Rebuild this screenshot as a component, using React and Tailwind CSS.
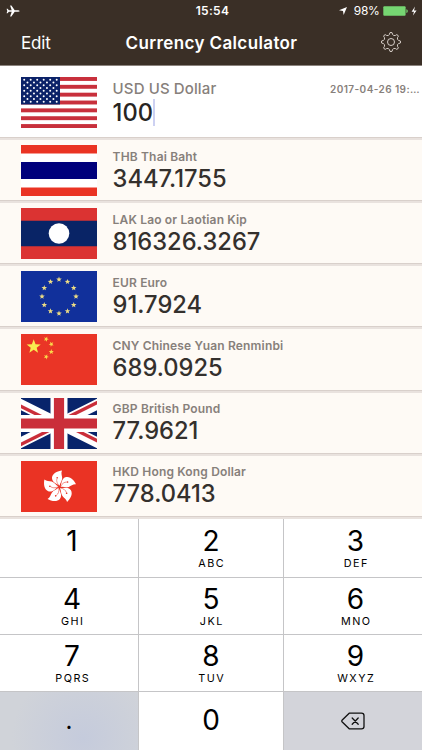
import { Fragment } from "react";

const starPoints = (cx, cy, r, turn = 0) =>
    Array.from({ length: 10 }, (_, i) => {
        const radius = i % 2 ? r * 0.42 : r;
        const a = ((i * 36 - 90 + turn) * Math.PI) / 180;
        return `${(cx + radius * Math.cos(a)).toFixed(2)},${(cy + radius * Math.sin(a)).toFixed(2)}`;
    }).join(" ");

function Flag({ children }) {
    return (
        <svg viewBox="0 0 76 51" preserveAspectRatio="none" className="h-[51px] w-[76px] shrink-0">
            {children}
        </svg>
    );
}

function UsFlag() {
    return (
        <Flag>
            <rect width="76" height="51" fill="#fff" />
            {[0, 2, 4, 6, 8, 10, 12].map((i) => (
                <rect key={i} y={(i * 51) / 13} width="76" height={51 / 13} fill="#c8303c" />
            ))}
            <rect width="39" height={(51 * 7) / 13} fill="#0b2268" />
            {Array.from({ length: 9 }, (_, row) =>
                Array.from({ length: row % 2 ? 5 : 6 }, (_, col) => (
                    <circle
                        key={`${row}-${col}`}
                        cx={3.2 + (row % 2 ? 3.25 : 0) + col * 6.5}
                        cy={2.8 + row * 2.75}
                        r="1"
                        fill="#fff"
                    />
                ))
            )}
        </Flag>
    );
}

function ThaiFlag() {
    return (
        <Flag>
            <rect width="76" height="51" fill="#ea3323" />
            <rect y="8.5" width="76" height="34" fill="#fff" />
            <rect y="17" width="76" height="17" fill="#00007b" />
        </Flag>
    );
}

function LaoFlag() {
    return (
        <Flag>
            <rect width="76" height="51" fill="#db3332" />
            <rect y="12.75" width="76" height="25.5" fill="#092466" />
            <circle cx="38" cy="25.5" r="10.3" fill="#fff" />
        </Flag>
    );
}

function EuFlag() {
    return (
        <Flag>
            <rect width="76" height="51" fill="#11309b" />
            {Array.from({ length: 12 }, (_, i) => (
                <polygon
                    key={i}
                    points={starPoints(
                        38 + 17 * Math.sin((i * Math.PI) / 6),
                        25.5 - 17 * Math.cos((i * Math.PI) / 6),
                        2.9
                    )}
                    fill="#eddc84"
                />
            ))}
        </Flag>
    );
}

function ChinaFlag() {
    return (
        <Flag>
            <rect width="76" height="51" fill="#ea3526" />
            <polygon points={starPoints(12.7, 12.7, 7.4)} fill="#f9ec4f" />
            <polygon points={starPoints(25.2, 5.1, 2.7, 23)} fill="#f9d94b" />
            <polygon points={starPoints(30.3, 10.2, 2.7, 46)} fill="#f9d94b" />
            <polygon points={starPoints(30.3, 17.8, 2.7)} fill="#f9d94b" />
            <polygon points={starPoints(25.2, 22.8, 2.7, 23)} fill="#f9d94b" />
        </Flag>
    );
}

// 2:1 flag cropped at both sides, so the saltire starts outside the box
function UkFlag() {
    return (
        <Flag>
            <rect width="76" height="51" fill="#08246b" />
            <path d="M-13 0L89 51M89 0L-13 51" stroke="#fff" strokeWidth="10.2" />
            <path
                d="M-13 0L38 25.5V29.3L-13 3.8ZM89 0L38 25.5V21.7L89 -3.8ZM89 51L38 25.5V21.7L89 47.2ZM-13 51L38 25.5V29.3L-13 54.8Z"
                fill="#ca2e3a"
            />
            <path d="M38 0V51M0 25.5H76" stroke="#fff" strokeWidth="17" />
            <path d="M38 0V51M0 25.5H76" stroke="#ca2e3a" strokeWidth="10.2" />
        </Flag>
    );
}

function HongKongFlag() {
    return (
        <Flag>
            <rect width="76" height="51" fill="#ea3324" />
            {[0, 72, 144, 216, 288].map((turn) => (
                <g key={turn} transform={`translate(38.4 26) rotate(${turn})`}>
                    <path
                        d="M0.2 -1.2C-2.5 -3 -7.8 -4.8 -7.4 -9.4C-6.9 -14 -1.5 -16.2 2.6 -16.6C1.3 -14 2.7 -11.6 2.8 -9C2.8 -6 0.6 -4 0.2 -1.2Z"
                        fill="#fff"
                    />
                    <path d="M0 -1C-2.6 -4 -3.2 -6 -2.4 -8.6" fill="none" stroke="#ea3324" strokeWidth="0.5" />
                    <circle cx="-2.2" cy="-9.3" r="0.8" fill="#ea3324" />
                </g>
            ))}
        </Flag>
    );
}

const currencies = [
    { name: "THB Thai Baht", value: "3447.1755", flag: ThaiFlag },
    { name: "LAK Lao or Laotian Kip", value: "816326.3267", flag: LaoFlag },
    { name: "EUR Euro", value: "91.7924", flag: EuFlag },
    { name: "CNY Chinese Yuan Renminbi", value: "689.0925", flag: ChinaFlag },
    { name: "GBP British Pound", value: "77.9621", flag: UkFlag },
    { name: "HKD Hong Kong Dollar", value: "778.0413", flag: HongKongFlag },
];

const keyRows = [
    { pad: "pt-1.5", keys: [["1", ""], ["2", "ABC"], ["3", "DEF"]] },
    { pad: "pt-[5px]", keys: [["4", "GHI"], ["5", "JKL"], ["6", "MNO"]] },
    { pad: "pt-[5px]", keys: [["7", "PQRS"], ["8", "TUV"], ["9", "WXYZ"]] },
];

const columnShift = ["pl-[6px]", "", "pl-[5px]"];

function StatusBar() {
    return (
        <div className="grid h-[21px] grid-cols-3 items-center pr-[5px] pl-[6px]">
            <svg viewBox="0 0 14 12" className="h-3 w-3.5" fill="#fff">
                <path d="M13.6 6C13.6 5.4 12.6 5.2 11.6 5.2H8.7L5.4 0.6H4.1L5.7 5.2H2.9L1.6 3.7H0.6L1.3 6L0.6 8.3H1.6L2.9 6.8H5.7L4.1 11.4H5.4L8.7 6.8H11.6C12.6 6.8 13.6 6.6 13.6 6Z" />
            </svg>
            <span className="pl-[2px] text-center text-[12px] font-semibold tracking-[0.35px]">15:54</span>
            <div className="flex items-center justify-end">
                <svg viewBox="0 0 10 10" className="mr-[7px] h-2 w-2" fill="#fff">
                    <path d="M10 0L5.8 10L5 5L0 4.2Z" />
                </svg>
                <span className="mr-[3.5px] text-[12px] tracking-[-0.3px]">98%</span>
                <svg viewBox="0 0 34 12" className="h-3 w-[34px]">
                    <rect x="0.3" y="1.2" width="22.3" height="9.6" rx="1" fill="#76d672" />
                    <path d="M23.4 4.2C25.2 4.6 25.2 7.6 23.4 8Z" fill="#76d672" />
                    <path d="M32 1.5L28.6 6.8H31L29.9 10.6L33.6 5.4H31Z" fill="#fff" />
                </svg>
            </div>
        </div>
    );
}

function GearIcon() {
    const teeth = Array.from({ length: 8 }, (_, i) => {
        const at = (deg, r) => {
            const a = ((i * 45 + deg - 90) * Math.PI) / 180;
            return `${(10 + r * Math.cos(a)).toFixed(2)} ${(10 + r * Math.sin(a)).toFixed(2)}`;
        };
        return `${i ? "L" : "M"}${at(-7, 9.3)}Q${at(0, 10)} ${at(7, 9.3)}L${at(11, 7.9)}Q${at(22.5, 6.2)} ${at(34, 7.9)}`;
    }).join("");
    return (
        <svg viewBox="0 0 20 20" className="mb-[2px] h-5 w-5" fill="none" stroke="#e6dfd9" strokeWidth="0.9" strokeLinejoin="round">
            <path d={`${teeth}Z`} />
            <circle cx="10" cy="10" r="3.5" />
        </svg>
    );
}

function BackspaceIcon() {
    return (
        <svg viewBox="0 0 24 18" className="h-[18px] w-6" fill="none" stroke="#111" strokeWidth="1.3" strokeLinejoin="round" strokeLinecap="round">
            <path d="M8.2 1.2H20.5Q23 1.2 23 3.5V14.5Q23 16.8 20.5 16.8H8.2L1 9.7Q0.5 9 1 8.3Z" />
            <path d="M11.2 6L17.2 12.2M17.2 6L11.2 12.2" />
        </svg>
    );
}

export default function App() {
    return (
        <div className="flex h-[750px] w-[422px] flex-col overflow-hidden bg-white font-[Inter,sans-serif]">
            <header className="h-[66px] shrink-0 border-b border-[#8b837d] bg-[#3a2f26] text-white">
                <StatusBar />
                <div className="grid h-11 grid-cols-[1fr_auto_1fr] items-center pr-[21px] pl-[21px]">
                    <span className="pt-[2px] text-[17px] tracking-[-0.2px]">Edit</span>
                    <h1 className="pt-[2px] pl-px text-[17px] font-semibold tracking-[0.38px]">Currency Calculator</h1>
                    <div className="flex justify-end">
                        <GearIcon />
                    </div>
                </div>
            </header>

            <section className="flex h-[71px] shrink-0 pt-[10.5px] pl-[21px]">
                <UsFlag />
                <div className="ml-[15.6px] flex-1 pt-[2.5px]">
                    <div className="flex items-center justify-between">
                        <span className="text-[15px] leading-5 font-medium tracking-[0.12px] text-[#87807b]">USD US Dollar</span>
                        <span className="pr-[2px] text-[10px] leading-4 font-semibold tracking-[0.42px] text-[#87807b]">
                            2017-04-26 19:…
                        </span>
                    </div>
                    <div className="flex items-center">
                        <span className="text-[23.7px] leading-[26px] font-[550] text-[#282523]">100</span>
                        <span className="h-[27px] w-[1.5px] bg-[#cdd1f2]" />
                    </div>
                </div>
            </section>

            <main className="h-[382px] shrink-0 bg-[#fefaf5]">
                {currencies.map(({ name, value, flag: CurrencyFlag }) => (
                    <Fragment key={name}>
                        <div className="h-[3px] border-t border-[#d9d0cb] bg-[#e9e2de]" />
                        <div className="flex h-[60.15px] pt-[5px] pl-[21px]">
                            <CurrencyFlag />
                            <div className="ml-[15.6px] pt-[3.6px]">
                                <div className="text-[12px] leading-4 font-semibold tracking-[0.16px] text-[#87807b]">{name}</div>
                                <div className="text-[23.7px] leading-[27px] font-[550] text-[#34302d]">{value}</div>
                            </div>
                        </div>
                    </Fragment>
                ))}
                <div className="h-[3px] border-t border-[#d9d0cb] bg-[#e9e2de]" />
            </main>

            <div className="grid flex-1 grid-cols-[138px_144px_138px] grid-rows-[58px_56px_56px_58px] gap-px bg-[#c5c5c7] text-black">
                {keyRows.map(({ pad, keys }) =>
                    keys.map(([digit, letters], col) => (
                        <div key={digit} className={`flex flex-col items-center bg-white ${pad} ${columnShift[col]}`}>
                            <span className="text-[28px] leading-8">{digit}</span>
                            <span className="mt-px pl-[1.5px] text-[10.8px] leading-3 tracking-[1.5px]">{letters}</span>
                        </div>
                    ))
                )}
                <div className="flex justify-center bg-[#d0d3d9] bg-[radial-gradient(circle_at_60%_80%,#c5cbdc,#d0d3d9_75%)] pt-[13px] text-[24px] leading-8">.</div>
                <div className="flex justify-center bg-white pt-[12px] text-[28px] leading-8">0</div>
                <div className="flex justify-center bg-[#d3d4da] pt-5">
                    <BackspaceIcon />
                </div>
            </div>
        </div>
    );
}
